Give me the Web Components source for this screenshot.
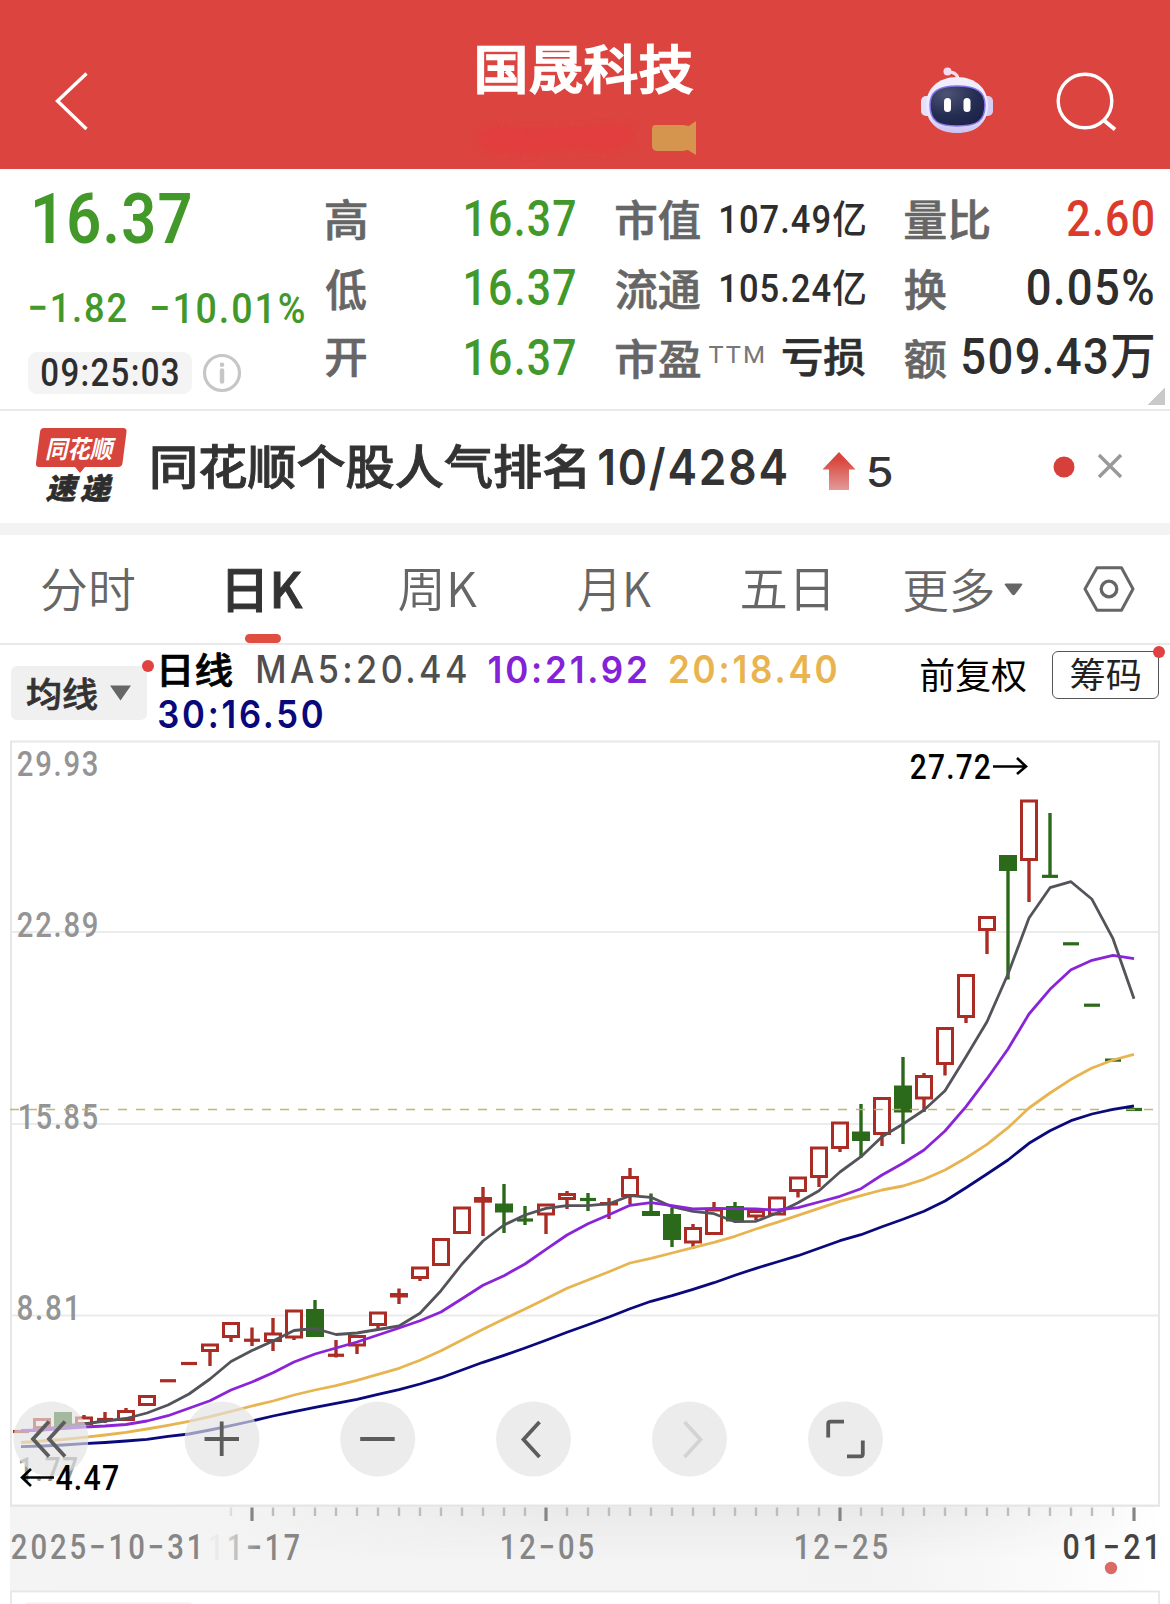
<!DOCTYPE html>
<html lang="zh-CN">
<head>
<meta charset="utf-8">
<title>国晟科技</title>
<style>
    body {
        margin: 0;
        width: 1170px;
        height: 1604px;
        overflow: hidden;
        background: #fff;
        color: #333;
        font-family: Roboto, "Noto Sans CJK SC", sans-serif;
    }
</style>
</head>
<body>
<stock-page></stock-page>

<script>
const DIN = 'Roboto, "Noto Sans CJK SC", sans-serif';
const SYS = 'Inter, "Noto Sans CJK SC", sans-serif';
const HAN = '"Noto Sans CJK SC", sans-serif';
const FAMILIES = { din: DIN, sys: SYS, han: HAN };
const measure = document.createElement('canvas').getContext('2d');

// Texto SVG cuya tinta ocupa exactamente la caja x, y, w, h
function inkText(text, x, y, w, h, { fill = 'currentColor', family = 'din', weight = 500, style = 'normal', spacing = 0, bold = 0 } = {}) {
    measure.font = `${style} ${weight} 100px ${FAMILIES[family]}`;
    measure.letterSpacing = `${spacing}px`;
    const m = measure.measureText(text);
    const sx = w / (m.actualBoundingBoxRight + m.actualBoundingBoxLeft);
    const sy = h / (m.actualBoundingBoxAscent + m.actualBoundingBoxDescent);
    const tx = x + m.actualBoundingBoxLeft * sx;
    const ty = y + m.actualBoundingBoxAscent * sy;
    return `<text transform="matrix(${sx} 0 0 ${sy} ${tx} ${ty})" font-size="100" font-weight="${weight}" letter-spacing="${spacing}"
        font-style="${style}" font-family='${FAMILIES[family]}' fill="${fill}" stroke="${bold ? fill : 'none'}" stroke-width="${bold}">${text}</text>`;
}

class BaseElement extends HTMLElement {
    constructor() {
        super();
        this.shadowDOM = this.attachShadow({ mode: 'open' });
    }

    connectedCallback() {
        this.shadowDOM.innerHTML = `<style>${this.templateCss()}</style>${this.template()}`;
    }

    template() { return '<slot></slot>'; }
    templateCss() { return ':host { display: block; }'; }
}

// Texto ajustado a un ancho y alto dados
class FitText extends BaseElement {
    template() {
        const w = +this.getAttribute('w');
        const h = +this.getAttribute('h');
        const opts = {
            family: this.getAttribute('family') || 'din',
            weight: this.getAttribute('weight') || 500,
            spacing: +this.getAttribute('spacing') || 0,
            bold: +this.getAttribute('bold') || 0
        };
        return `<svg width="${w}" height="${h}">${inkText(this.getAttribute('text'), 0, 0, w, h, opts)}</svg>`;
    }

    templateCss() {
        return `
            :host { display: block; flex: none; }
            svg { display: block; overflow: visible; }
        `;
    }
}
customElements.define('fit-text', FitText);

class StockHeader extends BaseElement {
    template() {
        return `
        <svg class="back" width="34" height="60" viewBox="0 0 34 60" fill="none" stroke="#fff" stroke-width="3.4">
            <path d="M31.500 2.500 L2.500 30 L31.500 58"/>
        </svg>
        <div class="title">
            <slot></slot>
            <svg class="smudge" width="222" height="36" viewBox="0 0 222 36">
                <defs><filter id="b" x="-10%" y="-30%" width="120%" height="160%"><feGaussianBlur stdDeviation="3"/></filter></defs>
                <g filter="url(#b)" fill="#e43c3d">
                    <path d="M3 14 Q18 0 38 6 Q60 10 84 6 L152 3 Q164 10 158 22 L132 32 L96 28 L58 34 L18 32 Q4 26 3 14Z" opacity=".8"/>
                </g>
                <path d="M180 4 H208 L214 5 L218 2 Q220 1 221 0 V34 Q216 31 213 29 L207 30 H183 Q177 30 177 25 V9 Q177 4 180 4Z" fill="#d5954f"/>
            </svg>
        </div>
        <svg class="robot" width="74" height="68" viewBox="0 0 74 68">
            <defs>
                <linearGradient id="shell" x1="0" y1="0" x2="0" y2="1">
                    <stop offset="0" stop-color="#f3eefb"/><stop offset=".65" stop-color="#ece7fc"/><stop offset="1" stop-color="#cbc0f2"/>
                </linearGradient>
                <radialGradient id="face" cx=".3" cy=".2" r=".9">
                    <stop offset="0" stop-color="#4c5374"/><stop offset=".6" stop-color="#252d52"/><stop offset="1" stop-color="#1b2148"/>
                </radialGradient>
            </defs>
            <circle cx="27.500" cy="4.500" r="4" fill="#f4dcf0"/>
            <path d="M28 5 Q38 5 38 13" fill="none" stroke="#f4dcf0" stroke-width="3"/>
            <rect x="1" y="29" width="12" height="20" rx="5" fill="#e5dff8"/>
            <rect x="61" y="29" width="12" height="20" rx="5" fill="#d5cdf4"/>
            <path d="M37 10 C56 10 68 22 68 38 C68 56 56 66 37 66 C18 66 6 56 6 38 C6 22 18 10 37 10Z" fill="url(#shell)"/>
            <path d="M37 19 C57 19 65 25 65 38 C65 54 57 59 37 59 C18 59 10 54 10 38 C10 25 18 19 37 19Z" fill="url(#face)" stroke="#8475ec" stroke-width="1.5"/>
            <rect x="24" y="31" width="7" height="14" rx="3.500" fill="#fff"/>
            <rect x="43.500" y="31" width="7" height="14" rx="3.500" fill="#fff"/>
        </svg>
        <svg class="search" width="62" height="62" viewBox="0 0 62 62" fill="none" stroke="#fff" stroke-width="3.4">
            <circle cx="29" cy="30" r="26.800"/>
            <path d="M47.500 49 L59 58.500" stroke-width="4"/>
        </svg>
        `;
    }

    templateCss() {
        return `
            :host { display: flex; height: 169px; background: #dc443f; color: #fff; }
            svg { display: block; flex: none; }
            .back { margin: 71px 0 0 55px; }
            .title { margin: 45px 0 0 385px; width: 222px; }
            ::slotted(fit-text) { margin-left: 3.5px; }
            .smudge { margin-top: 26px; overflow: visible; margin-left: .5px; }
            .robot { margin: 67px 0 0 224px; }
            .search { margin: 71px 0 0 62px; }
        `;
    }
}
customElements.define('stock-header', StockHeader);

// Fila con etiqueta a la izquierda y valor a la derecha
class StatRow extends BaseElement {
    template() {
        return '<slot name="label"></slot><slot name="note"></slot><slot name="value"></slot>';
    }

    templateCss() {
        return `
            :host { display: flex; align-items: center; height: 69.5px; color: #2e2e2e; }
            ::slotted([slot=label]) { color: #666; margin-top: 3.5px; }
            ::slotted([slot=note]) { color: #777; margin: -7px 0 0 9px; }
            ::slotted([slot=value]) { margin-left: auto; }
            :host([tone=down]) { color: #43982a; }
            :host([tone=up]) { color: #dc3a2b; }
        `;
    }
}
customElements.define('stat-row', StatRow);

class QuotePanel extends BaseElement {
    template() {
        return `
        <div class="price">
            <fit-text text="16.37" w="155" h="52" weight="600" spacing="2"></fit-text>
            <div class="change">
                <fit-text text="−1.82" w="96" h="30.500" spacing="5"></fit-text>
                <fit-text text="−10.01%" w="152" h="31" spacing="5"></fit-text>
            </div>
            <div class="time">
                <span class="pill"><fit-text text="09:25:03" w="136" h="28.500" spacing="4"></fit-text></span>
                <svg width="40" height="40" viewBox="0 0 40 40" fill="none" stroke="#c6c6c6">
                    <circle cx="20" cy="20" r="17.500" stroke-width="3.2"/>
                    <path d="M20 17.500V28.500" stroke-width="4.500" stroke-linecap="round"/>
                    <circle cx="20" cy="11.800" r="2.300" fill="#c6c6c6" stroke="none"/>
                </svg>
            </div>
        </div>
        <div class="col">
            <stat-row tone="down"><fit-text slot="label" family="han" text="高" w="40" h="41" bold="1.5"></fit-text><fit-text slot="value" text="16.37" w="109" h="36.500" spacing="3"></fit-text></stat-row>
            <stat-row tone="down"><fit-text slot="label" family="han" text="低" w="40" h="41" bold="1.5"></fit-text><fit-text slot="value" text="16.37" w="109" h="36.500" spacing="3"></fit-text></stat-row>
            <stat-row tone="down"><fit-text slot="label" family="han" text="开" w="40" h="38.500" bold="1.5"></fit-text><fit-text slot="value" text="16.37" w="109" h="36.500" spacing="3"></fit-text></stat-row>
        </div>
        <div class="col">
            <stat-row><fit-text slot="label" family="han" text="市值" w="84" h="40.500" bold="1.5"></fit-text><fit-text slot="value" text="107.49亿" w="144" h="36" spacing="3"></fit-text></stat-row>
            <stat-row><fit-text slot="label" family="han" text="流通" w="84" h="40.500" bold="1.5"></fit-text><fit-text slot="value" text="105.24亿" w="144" h="36" spacing="3"></fit-text></stat-row>
            <stat-row><fit-text slot="label" family="han" text="市盈" w="84" h="40" bold="1.5"></fit-text><fit-text slot="note" text="TTM" w="54" h="17.500" weight="400" spacing="8"></fit-text><fit-text slot="value" family="han" text="亏损" w="82" h="39" bold="1.5"></fit-text></stat-row>
        </div>
        <div class="col last">
            <stat-row tone="up"><fit-text slot="label" family="han" text="量比" w="84" h="40.500" bold="1.5"></fit-text><fit-text slot="value" text="2.60" w="85" h="36.500" spacing="3"></fit-text></stat-row>
            <stat-row><fit-text slot="label" family="han" text="换" w="41" h="41" bold="1.5"></fit-text><fit-text slot="value" text="0.05%" w="125" h="36.500" spacing="3"></fit-text></stat-row>
            <stat-row><fit-text slot="label" family="han" text="额" w="41" h="40" bold="1.5"></fit-text><fit-text slot="value" text="509.43万" w="190" h="44" spacing="3"></fit-text></stat-row>
        </div>
        <i class="corner"></i>
        `;
    }

    templateCss() {
        return `
            :host { display: flex; position: relative; box-sizing: border-box; height: 242px; border-bottom: 2px solid #e9e9e9; }
            .price { width: 326px; box-sizing: border-box; padding: 23px 0 0 35px; color: #43982a; }
            .change { display: flex; gap: 26px; margin: 48px 0 0 -5px; }
            .time { display: flex; gap: 9.5px; margin: 28.5px 0 0 -7px; align-items: center; }
            .pill { display: flex; align-items: center; justify-content: center; box-sizing: border-box; padding-bottom: 1px;
                width: 164px; height: 42px; border-radius: 9px; background: #f4f4f4; color: #2e2e2e; }
            .col { width: 249px; margin-right: 41px; padding-top: 14px; }
            .last { width: 248px; margin: 0 0 0 -1px; }
            .corner { position: absolute; right: 5px; bottom: 4px; border: solid transparent; border-width: 17px 0 0 17px;
                width: 0; height: 0; background: linear-gradient(135deg, transparent 50%, #c9c9c9 50%) border-box; }
        `;
    }
}
customElements.define('quote-panel', QuotePanel);

class NewsBar extends BaseElement {
    template() {
        return `
        <svg class="logo" width="92" height="76" viewBox="36 428 92 76">
            <path d="M44 428 H123 Q127 428 126.500 432 L122.500 463 Q122 467 118 467 H85 L80 473 L75 467 H39 Q35.500 467 36 463 L40 432 Q40.500 428 44 428Z" fill="#d7443b"/>
            ${inkText('同花顺', 46, 437, 70, 23.500, { fill: '#fff', family: 'han', weight: 700, style: 'italic' })}
            ${inkText('速递', 46, 474, 67, 28.500, { fill: '#2d2d2d', family: 'han', weight: 900, style: 'italic', spacing: 16, bold: 2 })}
        </svg>
        <fit-text class="headline" family="han" text="同花顺个股人气排名" w="431.500" h="45" bold="2"></fit-text>
        <fit-text class="rank" family="sys" text="10/4284" w="187" h="44" spacing="4" weight="600"></fit-text>
        <svg class="arrow" width="34" height="38" viewBox="0 0 34 38">
            <defs><linearGradient id="g" x1="0" y1="0" x2="0" y2="1">
                <stop offset=".2" stop-color="#d9463d"/><stop offset="1" stop-color="#e39a98"/>
            </linearGradient></defs>
            <path d="M17 0 L33.500 17.500 H27 V38 H7 V17.500 H0.500Z" fill="url(#g)"/>
        </svg>
        <fit-text class="delta" family="sys" text="5" w="22.500" h="30"></fit-text>
        <svg class="dot" width="22" height="22"><circle cx="11" cy="11" r="10.500" fill="#d7403a"/></svg>
        <svg class="close" width="24" height="24" viewBox="0 0 24 24" stroke="#999" stroke-width="3.4">
            <path d="M1 1 L23 23 M23 1 L1 23"/>
        </svg>
        `;
    }

    templateCss() {
        return `
            :host { display: flex; align-items: center; height: 112px; border-bottom: 12px solid #f3f3f3; color: #333; }
            svg { display: block; flex: none; overflow: visible; }
            .logo { margin: -2px 25px 0 36px; }
            .headline { margin-top: -2px; }
            .rank { margin: 1px 0 0 14.5px; }
            .arrow { margin: 8px 0 0 36px; }
            .delta { margin: 10px 0 0 13px; }
            .dot { margin: -1px 0 0 161px; }
            .close { margin: -2px 0 0 23.5px; }
        `;
    }
}
customElements.define('news-bar', NewsBar);

class PeriodTab extends BaseElement {
    templateCss() {
        return `
            :host { display: block; position: relative; color: #666; margin-top: 2px; }
            :host([active]) { color: #333; }
            :host([active])::after {
                content: ""; position: absolute; left: 17px; top: 65px;
                width: 35.5px; height: 9px; border-radius: 4.5px; background: #e04d41;
            }
        `;
    }
}
customElements.define('period-tab', PeriodTab);

class PeriodTabs extends BaseElement {
    template() {
        return `
        <slot></slot>
        <svg class="more" width="19" height="13"><path d="M1.500 0.500 H17.500 L18.500 1.500 L11 11.500 Q9.500 13 8 11.500 L0.500 1.500Z" fill="#666"/></svg>
        <svg class="gear" width="52" height="46" viewBox="0 0 52 46" fill="none" stroke="#666" stroke-width="3">
            <path d="M14 1.700 H38.500 L50 23 L38.500 44.300 H14 L2 23Z" stroke-linejoin="round"/>
            <circle cx="26" cy="23" r="7.800" stroke-width="3.300"/>
        </svg>
        `;
    }

    templateCss() {
        return `
            :host { display: flex; align-items: center; height: 108px; border-bottom: 2px solid #e9e9e9; }
            svg { display: block; flex: none; }
            .more { margin-left: 11px; }
            .gear { margin-left: 60px; }
        `;
    }
}
customElements.define('period-tabs', PeriodTabs);

class IndicatorBar extends BaseElement {
    template() {
        return `
        <div class="picker">
            <fit-text family="han" text="均线" w="70" h="33" bold="2"></fit-text>
            <svg width="21" height="16"><path d="M0 0.500 H21 L10.500 15.500Z" fill="#666"/></svg>
            <i class="dot"></i>
        </div>
        <div class="legend">
            <div class="line">
                <fit-text family="han" text="日线" w="70" h="35" bold="2" style="color:#000"></fit-text>
                <fit-text family="sys" text="MA5:20.44" w="208" h="28.500" spacing="10" style="color:#4f4f4f; margin-left:26px"></fit-text>
                <fit-text family="sys" weight="600" text="10:21.92" w="157" h="28.500" spacing="8" style="color:#8322d6; margin-left:23px"></fit-text>
                <fit-text family="sys" weight="600" text="20:18.40" w="166" h="28.500" spacing="8" style="color:#e9b44f; margin-left:24px"></fit-text>
            </div>
            <fit-text class="second" family="sys" weight="600" text="30:16.50" w="163" h="28.500" spacing="8" style="color:#09077c"></fit-text>
        </div>
        <fit-text class="adjust" family="han" weight="400" text="前复权" w="105" h="34"></fit-text>
        <div class="chips">
            <fit-text family="han" weight="400" text="筹码" w="69" h="33"></fit-text>
            <i class="dot"></i>
        </div>
        `;
    }

    templateCss() {
        return `
            :host { display: flex; height: 95px; }
            .picker { position: relative; display: flex; align-items: center; gap: 13px; box-sizing: border-box;
                width: 136px; height: 54px; margin: 21px 0 0 11px; padding-left: 16px; border-radius: 6px; background: #f0f0f0; }
            .dot { position: absolute; right: -6.5px; top: -6px; width: 12px; height: 12px; border-radius: 6px; background: #e04141; }
            .legend { width: 677px; margin: 6.5px 0 0 11.5px; }
            .line { display: flex; align-items: center; padding-left: 3px; }
            .second { margin-top: 13px; }
            .adjust { margin: 13px 0 0 85.5px; color: #000; }
            .chips { position: relative; display: flex; align-items: center; justify-content: center; box-sizing: border-box;
                width: 107px; height: 48px; margin: 6px 0 0 26px; padding-bottom: 1px; border: 1.5px solid #555; border-radius: 6px; color: #222; }
        `;
    }
}
customElements.define('indicator-bar', IndicatorBar);

// Velas: [tipo, apertura/cierre superior, inferior, máximo, mínimo] en píxeles de la página
const CANDLES = [
    ['r', 1431, 1432, 0, 0], ['r', 1418, 1429, 0, 0], ['g', 1412, 1426, 0, 0], ['r', 1416.5, 1425, 1415, 0],
    ['r', 1418, 1421, 1412, 1423], ['r', 1410, 1421, 1408, 0], ['r', 1395, 1406, 0, 0], ['r', 1379.5, 1382, 0, 0],
    ['r', 1363, 1364, 0, 0], ['r', 1343.5, 1352, 0, 1366], ['r', 1322, 1338, 0, 1342], ['r', 1339, 1341.5, 1327.5, 1346],
    ['r', 1332.5, 1342, 1318, 1351], ['r', 1309.5, 1338.5, 0, 1340], ['g', 1309, 1337, 1300, 0], ['r', 1354, 1356.5, 1340, 1357.5],
    ['r', 1335, 1346.5, 0, 1354], ['r', 1311.5, 1326, 0, 1328.5], ['r', 1293, 1297.5, 1288.5, 1304], ['r', 1266.5, 1279, 0, 1281],
    ['r', 1238, 1266, 0, 0], ['r', 1206.5, 1234, 0, 0], ['r', 1197, 1202.7, 1187, 1236], ['g', 1203.5, 1212.5, 1184, 1233],
    ['g', 1218.5, 1221.5, 1206, 1225], ['r', 1203.5, 1215.5, 0, 1234], ['r', 1193, 1200, 1191, 1209], ['g', 1198, 1201, 1193, 1211],
    ['r', 1202, 1205.5, 1198, 1219], ['r', 1176, 1197, 1168, 1204], ['g', 1211, 1216, 1193.5, 0], ['g', 1214, 1240, 1208, 1247],
    ['r', 1227, 1243.5, 1224, 1249], ['r', 1208.5, 1235, 1202, 0], ['g', 1206, 1221.5, 1202, 0], ['r', 1210, 1217.5, 0, 1220],
    ['r', 1196.5, 1215.5, 0, 0], ['r', 1176.5, 1192, 0, 1197.5], ['r', 1146.5, 1178, 0, 1187], ['r', 1121.5, 1149, 0, 1152],
    ['g', 1131.5, 1141, 1104, 1157.5], ['r', 1097, 1135, 0, 1146], ['g', 1085.5, 1112.5, 1057, 1144], ['r', 1075, 1099.5, 1073, 1112],
    ['r', 1027, 1065, 0, 1075.5], ['r', 974, 1018, 0, 1023], ['r', 916, 931, 0, 954], ['g', 855, 871, 0, 979.5],
    ['r', 799.5, 861, 0, 902], ['g', 875, 877.7, 813, 0], ['g', 942.3, 945.3, 0, 0], ['g', 1003.7, 1006.7, 0, 0],
    ['g', 1058.7, 1061.5, 0, 0], ['g', 1108.5, 1110.5, 0, 0]
];

const AVERAGES = [
    ['#53535a', [1431, 1430, 1426, 1424, 1421, 1418.5, 1413, 1405, 1394, 1379, 1361.5, 1350.5, 1341, 1330.5, 1328.5, 1334.5, 1333, 1329.5,
        1326, 1313.3, 1290.7, 1264, 1241, 1225, 1215, 1208.3, 1205.7, 1205.7, 1203.7, 1195.7, 1197.3, 1206.7, 1211.3, 1213.7, 1221.7, 1221.3,
        1213, 1202.7, 1190.7, 1172, 1156.7, 1136.7, 1124, 1110, 1090.7, 1056.7, 1021.7, 974, 918, 887.7, 881.7, 899.3, 938.7, 998.7]],
    ['#8a24d8', [1430.5, 1430, 1428.5, 1427, 1426, 1424.5, 1421, 1415.7, 1408.3, 1400.7, 1390, 1382, 1372.7, 1362, 1354, 1348, 1342, 1335,
        1328, 1320.7, 1312, 1298.7, 1285.3, 1275.7, 1264, 1249.3, 1235, 1223.7, 1214.7, 1205.3, 1202.7, 1205.7, 1209, 1208.5, 1208.7, 1209,
        1210, 1207.7, 1202, 1196.3, 1188.7, 1175, 1163.3, 1150, 1131, 1106.7, 1078.7, 1049, 1014, 989.3, 969.7, 960.3, 955.3, 958.7]],
    ['#e8b450', [1442.5, 1441, 1439.5, 1437.3, 1435, 1432.3, 1429, 1425.3, 1421.3, 1416.7, 1411.3, 1406, 1401, 1395, 1390, 1385.7, 1380.3, 1374.3,
        1368.3, 1360.3, 1350.7, 1340, 1329.3, 1319, 1309, 1298.7, 1288.3, 1280, 1271.7, 1263, 1258.3, 1253, 1247.7, 1242.3, 1236.3, 1229,
        1222.3, 1215.3, 1208.3, 1201.3, 1195.7, 1190, 1186, 1179.3, 1170, 1158, 1144.3, 1127.7, 1108, 1093, 1079.3, 1068, 1060, 1054.3]],
    ['#0b0a7c', [1446.7, 1446, 1445, 1443.7, 1442.5, 1441, 1439.3, 1436.3, 1434, 1430, 1425.7, 1421, 1416, 1411.7, 1407.3, 1403.3, 1399.3, 1394.3,
        1389.7, 1384, 1377.7, 1370, 1362.3, 1355.3, 1348, 1340.3, 1332.3, 1324.7, 1317, 1308.7, 1301.3, 1295.7, 1289.3, 1282.7, 1275.3, 1268.3,
        1262, 1255.7, 1248.3, 1240.7, 1234.7, 1226.7, 1219.3, 1211.3, 1201, 1187.7, 1174, 1160, 1143.3, 1130.7, 1120.7, 1114, 1109.3, 1106]]
];

const candleX = i => 21 + 21 * i;

class KlineChart extends BaseElement {
    candle([kind, top, bottom, high, low], i) {
        const x = candleX(i);
        const color = kind === 'r' ? '#aa2c24' : '#2c6a1b';
        let out = '';
        if (high) out += `<path d="M${x} ${high}V${top + 1}" stroke="${color}" stroke-width="3.4"/>`;
        if (low) out += `<path d="M${x} ${bottom - 1}V${low}" stroke="${color}" stroke-width="3.4"/>`;
        const h = bottom - top;
        if (h < 3.2) {
            return out + `<rect x="${x - 8}" y="${(top + bottom) / 2 - 1.6}" width="16" height="3.200" fill="${color}"/>`;
        }
        if (kind === 'r' && h > 6) {
            return out + `<rect x="${x - 7.5}" y="${top + 1.5}" width="15" height="${h - 3}" fill="#fff" stroke="${color}" stroke-width="3"/>`;
        }
        return out + `<rect x="${x - 9}" y="${top}" width="18" height="${h}" fill="${color}"/>`;
    }

    average([color, ys]) {
        const points = ys.map((y, i) => `${candleX(i)},${y}`).join(' ');
        return `<polyline points="${points}" fill="none" stroke="${color}" stroke-width="2.800" stroke-linejoin="round"/>`;
    }

    ticks() {
        let out = '';
        for (let i = 10; i < 54; i++) {
            const major = [11, 25, 39, 53].includes(i);
            out += `<path d="M${candleX(i)} 1507.500V${major ? 1521 : 1516}" stroke="${major ? '#858585' : i === 10 ? '#ddd' : '#bdbdbd'}" stroke-width="${major ? 3.2 : 2.4}"/>`;
        }
        return out;
    }

    button(x, icon, color = '#5c5c5c') {
        return `<g transform="translate(${x} 1439)">
            <circle r="37.500" fill="#e2e2e2" fill-opacity=".66"/>
            <path d="${icon}" fill="none" stroke="${color}" stroke-width="3.800"/>
        </g>`;
    }

    template() {
        const grey = { fill: '#949494', spacing: 6 };
        const date = { fill: '#868686', spacing: 10 };
        const mark = { fill: '#000', spacing: 4 };
        return `
        <svg width="1170" height="864" viewBox="0 740 1170 864">
            <defs>
                <linearGradient id="axis" x1="0" x2="1" y1="0" y2="0">
                    <stop offset="0" stop-color="#f4f4f4"/><stop offset=".75" stop-color="#f3f3f3"/><stop offset="1" stop-color="#fff"/>
                </linearGradient>
                <linearGradient id="shade" x1="0" x2="0" y1="0" y2="1">
                    <stop offset="0" stop-color="#e9e9e9"/><stop offset="1" stop-color="#e9e9e9" stop-opacity="0"/>
                </linearGradient>
                <linearGradient id="sides" x1="0" x2="1" y1="0" y2="0">
                    <stop offset="0" stop-color="#000"/><stop offset=".35" stop-color="#fff"/><stop offset=".7" stop-color="#fff"/><stop offset="1" stop-color="#000"/>
                </linearGradient>
                <linearGradient id="late" x1="0" x2="1" y1="0" y2="0">
                    <stop offset="0" stop-color="#efefef"/><stop offset=".14" stop-color="#e8e8e8"/><stop offset=".32" stop-color="#bbb"/><stop offset=".55" stop-color="#868686"/>
                </linearGradient>
                <mask id="m"><rect x="230" y="1507" width="930" height="84" fill="url(#sides)"/></mask>
            </defs>

            <path d="M11 932H1159M11 1124H1159M11 1315.500H1159" stroke="#ebebeb" stroke-width="2"/>
            <rect x="11" y="741.500" width="1148" height="764" fill="none" stroke="#e7e7e7" stroke-width="2"/>
            ${inkText('29.93', 18, 750.5, 79, 25.5, grey)}
            ${inkText('22.89', 18, 911.5, 79, 25.5, grey)}
            ${inkText('15.85', 20, 1103.5, 77, 25.5, grey)}
            ${inkText('8.81', 18, 1295, 57, 25.5, grey)}
            ${inkText('1.77', 20, 1457, 57, 24.5, grey)}
            ${CANDLES.map(this.candle).join('')}
            <path d="M10 1109.500H1156" stroke="#bfae68" stroke-width="1.500" stroke-dasharray="9 9" stroke-opacity=".9"/>
            ${AVERAGES.map(this.average).join('')}

            ${this.button(51, 'M-2 -17.500L-18 0L-2 17.500M14 -17.500L-2 0L14 17.500')}
            ${this.button(222, 'M-17.500 0H17M-0.300 -17.500V17')}
            ${this.button(377.7, 'M-17.500 0H17')}
            ${this.button(533.5, 'M6 -17L-10 0.500L6 18')}
            ${this.button(689.5, 'M-5 -17L11 0.500L-5 18', '#d3d3d3')}
            ${this.button(845.5, 'M-1.500 -17.300H-15Q-17.300 -17.300 -17.300 -15V-1.500M17.300 1.500V15Q17.300 17.300 15 17.300H1.500')}

            ${inkText('4.47', 56, 1465, 62, 25, mark)}
            <path d="M54 1477.500H22M31 1469L22 1477.500L31 1486" fill="none" stroke="#000" stroke-width="2.600"/>
            ${inkText('27.72', 911, 754, 79, 25.5, mark)}
            <path d="M993 766.500H1026M1017 758L1026 766.500L1017 774" fill="none" stroke="#000" stroke-width="2.600"/>

            <rect x="10" y="1506.500" width="1150" height="85" fill="url(#axis)"/>
            <rect x="230" y="1507" width="930" height="50" fill="url(#shade)" mask="url(#m)"/>
            <path d="M10 1506H1160" stroke="#e4e4e4" stroke-width="1.500"/>
            ${this.ticks()}
            ${inkText('2025−10−31', 12, 1533.5, 186, 26, date)}
            ${inkText('11−17', 210, 1533.5, 89, 26, { ...date, fill: 'url(#late)' })}
            ${inkText('12−05', 502, 1533.5, 91, 26, date)}
            ${inkText('12−25', 796, 1533.5, 91, 26, date)}
            ${inkText('01−21', 1064, 1533.5, 91, 26, { ...date, fill: '#444' })}
            <circle cx="1111" cy="1568" r="6.200" fill="#d96a64"/>

            <rect x="11" y="1591.500" width="1148" height="30" fill="#fff" stroke="#e7e7e7" stroke-width="1.800"/>
            <rect x="24" y="1602.500" width="169" height="10" rx="4" fill="#f0f0f0"/>
        </svg>
        `;
    }

    templateCss() {
        return `
            :host { display: block; height: 864px; }
            svg { display: block; }
        `;
    }
}
customElements.define('kline-chart', KlineChart);

class StockPage extends BaseElement {
    template() {
        return `
        <stock-header><fit-text family="han" text="国晟科技" w="214.500" h="49.500" bold="3"></fit-text></stock-header>
        <quote-panel></quote-panel>
        <news-bar></news-bar>
        <period-tabs>
            <period-tab style="margin-left:42px"><fit-text family="han" weight="350" text="分时" w="92" h="43.500"></fit-text></period-tab>
            <period-tab active style="margin-left:94px"><fit-text family="han" text="日K" w="74.500" h="43" bold="2"></fit-text></period-tab>
            <period-tab style="margin-left:96.500px"><fit-text family="han" weight="350" text="周K" w="78" h="42.500"></fit-text></period-tab>
            <period-tab style="margin-left:101px"><fit-text family="han" weight="350" text="月K" w="73" h="42.500"></fit-text></period-tab>
            <period-tab style="margin-left:91px"><fit-text family="han" weight="350" text="五日" w="86" h="42"></fit-text></period-tab>
            <period-tab style="margin-left:76px"><fit-text family="han" weight="350" text="更多" w="89" h="44"></fit-text></period-tab>
        </period-tabs>
        <indicator-bar></indicator-bar>
        <kline-chart></kline-chart>
        `;
    }
}
customElements.define('stock-page', StockPage);
</script>
</body>
</html>
